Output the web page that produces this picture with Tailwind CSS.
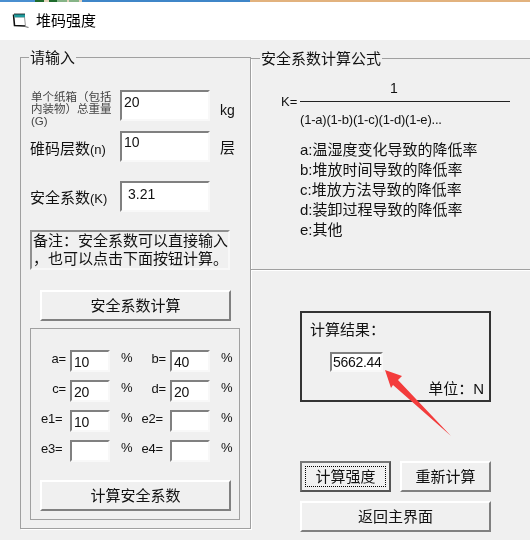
<!DOCTYPE html>
<html>
<head>
<meta charset="utf-8">
<script src="https://cdn.jsdelivr.net/npm/@tailwindcss/browser@4"></script>
</head>
<body class="m-0 bg-[#f0f0f0]">
<div class="relative w-[530px] h-[540px] overflow-hidden bg-[#f0f0f0] text-[#111] blur-[0.3px] font-['Liberation_Sans','Noto_Sans_CJK_SC',sans-serif] text-[15px] leading-[18px]">
  <div class="flex h-[2px]">
    <div class="w-[35px] bg-[#4a8fd0]"></div>
    <div class="w-[9px] bg-[#1f6b2c]"></div>
    <div class="w-[5px] bg-[#e6d4bc]"></div>
    <div class="w-[8px] bg-[#1f6b2c]"></div>
    <div class="w-[10px] bg-[#86b487]"></div>
    <div class="w-[2px] bg-[#e6d4bc]"></div>
    <div class="w-[10px] bg-[#86b487]"></div>
    <div class="w-[3px] bg-[#e6d4bc]"></div>
    <div class="w-[168px] bg-[#3f86c8]"></div>
    <div class="flex-1 bg-[#e2b27e]"></div>
  </div>
  <div class="h-[38px] bg-white flex items-center pl-[12px] gap-[7px] text-[15px]">
    <svg width="17" height="16" viewBox="0 0 17 16"><path d="M3 4h9.5l1 9.5" fill="none" stroke="#999" stroke-width="1"/><path d="M1.5 1.5L2.5 12.5L13 13" fill="none" stroke="#111" stroke-width="1.6"/><path d="M2 1h11v3.2H2.4z" fill="#1f9a9c"/><path d="M2 1h11" stroke="#111" stroke-width="0.8"/><path d="M13 13.5l3.5 1" stroke="#777" stroke-width="1.2"/></svg>
    <span class="text-black">堆码强度</span>
  </div>
  <div class="flex items-start pt-[17px] pl-[20px]">
    <!-- left group -->
    <div class="relative shrink-0 w-[231px] h-[472px] border border-[#a0a0a0] shadow-[1px_1px_0_#fff] pl-[9px]">
      <span class="absolute left-[8px] top-[-9px] px-[1px] bg-[#f0f0f0]">请输入</span>
      <div class="flex flex-col pt-[32px]">
        <div class="flex h-[31px] mb-[10px]">
          <div class="w-[90px] text-[11.5px] leading-[12px] text-[#444] pt-[1px] pl-[1px] whitespace-nowrap"><div>单个纸箱（包括</div><div>内装物）总重量</div><div>(G)</div></div>
          <div class="w-[90px] h-[31px] bg-white border-2 border-t-[#808080] border-l-[#808080] border-r-[#f8f8f8] border-b-[#f8f8f8] pl-[2px] text-[14px] leading-[20px]">20</div>
          <span class="ml-[10px] mt-[11px] text-[14px]">kg</span>
        </div>
        <div class="flex h-[31px] mb-[19px]">
          <div class="w-[90px] pt-[9px]">碓码层数<span class="text-[13px]">(n)</span></div>
          <div class="w-[90px] h-[31px] bg-white border-2 border-t-[#808080] border-l-[#808080] border-r-[#f8f8f8] border-b-[#f8f8f8] pl-[2px] text-[14px] leading-[18px]">10</div>
          <span class="ml-[10px] pt-[8px]">层</span>
        </div>
        <div class="flex h-[31px] mb-[18px]">
          <div class="w-[90px] pt-[8px]">安全系数<span class="text-[13px]">(K)</span></div>
          <div class="w-[90px] h-[31px] bg-white border-2 border-t-[#808080] border-l-[#808080] border-r-[#f8f8f8] border-b-[#f8f8f8] pl-[6px] text-[14px] leading-[22px]">3.21</div>
        </div>
        <div class="w-[200px] h-[40px] border-2 border-t-[#909090] border-l-[#909090] border-r-[#f8f8f8] border-b-[#f8f8f8] text-[15px] leading-[18px] pl-[1px] whitespace-nowrap"><div>备注：安全系数可以直接输入</div><div>，也可以点击下面按钮计算。</div></div>
        <button class="w-[191px] h-[31px] ml-[10px] mt-[20px] bg-[#f0f0f0] border-2 border-t-white border-l-white border-r-[#808080] border-b-[#808080] text-[15px]">安全系数计算</button>
        <!-- inner group -->
        <div class="w-[210px] h-[192px] mt-[7px] border border-[#a0a0a0] pt-[21px]">
          <div class="grid grid-cols-[39px_40px_60px_40px_20px] auto-rows-[22px] gap-y-[8px] text-[13px] leading-[18px] tracking-[-0.2px]">
            <div class="pr-[4px] text-right">a=</div>
            <div class="w-[40px] h-[22px] bg-white border-2 border-t-[#808080] border-l-[#808080] border-r-[#f8f8f8] border-b-[#f8f8f8] pl-[2px] text-[14px] leading-[20px]">10</div>
            <div class="flex justify-between pl-[11px] pr-[4px]"><span class="leading-[15px]">%</span><span>b=</span></div>
            <div class="w-[40px] h-[22px] bg-white border-2 border-t-[#808080] border-l-[#808080] border-r-[#f8f8f8] border-b-[#f8f8f8] pl-[2px] text-[14px] leading-[20px]">40</div>
            <div class="pl-[11px] leading-[15px]">%</div>

            <div class="pr-[4px] text-right">c=</div>
            <div class="w-[40px] h-[22px] bg-white border-2 border-t-[#808080] border-l-[#808080] border-r-[#f8f8f8] border-b-[#f8f8f8] pl-[2px] text-[14px] leading-[20px]">20</div>
            <div class="flex justify-between pl-[11px] pr-[4px]"><span class="leading-[15px]">%</span><span>d=</span></div>
            <div class="w-[40px] h-[22px] bg-white border-2 border-t-[#808080] border-l-[#808080] border-r-[#f8f8f8] border-b-[#f8f8f8] pl-[2px] text-[14px] leading-[20px]">20</div>
            <div class="pl-[11px] leading-[15px]">%</div>

            <div class="pl-[10px]">e1=</div>
            <div class="w-[40px] h-[22px] bg-white border-2 border-t-[#808080] border-l-[#808080] border-r-[#f8f8f8] border-b-[#f8f8f8] pl-[2px] text-[14px] leading-[20px]">10</div>
            <div class="flex justify-between pl-[11px] pr-[7px]"><span class="leading-[15px]">%</span><span>e2=</span></div>
            <div class="w-[40px] h-[22px] bg-white border-2 border-t-[#808080] border-l-[#808080] border-r-[#f8f8f8] border-b-[#f8f8f8]"></div>
            <div class="pl-[11px] leading-[15px]">%</div>

            <div class="pl-[10px]">e3=</div>
            <div class="w-[40px] h-[22px] bg-white border-2 border-t-[#808080] border-l-[#808080] border-r-[#f8f8f8] border-b-[#f8f8f8]"></div>
            <div class="flex justify-between pl-[11px] pr-[7px]"><span class="leading-[15px]">%</span><span>e4=</span></div>
            <div class="w-[40px] h-[22px] bg-white border-2 border-t-[#808080] border-l-[#808080] border-r-[#f8f8f8] border-b-[#f8f8f8]"></div>
            <div class="pl-[11px] leading-[15px]">%</div>
          </div>
          <button class="block w-[191px] h-[31px] ml-[9px] mt-[18px] bg-[#f0f0f0] border-2 border-t-white border-l-white border-r-[#808080] border-b-[#808080] text-[15px]">计算安全系数</button>
        </div>
      </div>
    </div>
    <!-- right column -->
    <div class="ml-[-1px] w-[285px] shrink-0">
      <div class="relative h-[212px] mt-[1px] border border-[#a0a0a0] shadow-[1px_1px_0_#fff]">
        <span class="absolute left-[9px] top-[-9px] px-[1px] bg-[#f0f0f0]">安全系数计算公式</span>
        <div class="flex items-center pl-[30px] pt-[33px] h-[52px]">
          <span class="text-[13px] w-[19px]">K=</span>
          <div class="relative w-[210px] h-[1px] bg-[#222]"><span class="absolute left-0 w-[188px] top-[-22px] text-center text-[14px]">1</span></div>
        </div>
        <div class="pl-[49px] text-[13px] tracking-[-0.2px]">(1-a)(1-b)(1-c)(1-d)(1-e)...</div>
        <div class="pl-[49px] pt-[11px] text-[15px] leading-[20px]">
          <div>a:温湿度变化导致的降低率</div>
          <div>b:堆放时间导致的降低率</div>
          <div>c:堆放方法导致的降低率</div>
          <div>d:装卸过程导致的降低率</div>
          <div>e:其他</div>
        </div>
      </div>
      <div class="ml-[50px] mt-[41px] relative w-[191px] h-[91px] border-2 border-[#333]">
        <div class="pl-[8px] pt-[8px]">计算结果：</div>
        <div class="ml-[28px] mt-[13px] w-[53px] h-[20px] bg-white border-2 border-t-[#808080] border-l-[#808080] border-r-[#f8f8f8] border-b-[#f8f8f8] text-[14px] leading-[16px] pl-[1px] whitespace-nowrap tracking-[-0.3px]">5662.44</div>
        <div class="absolute right-[5px] bottom-[2px] text-[15px]">单位：N</div>
      </div>
      <div class="ml-[50px] mt-[59px] flex gap-[9px]">
        <button class="w-[91px] h-[31px] bg-[#f0f0f0] border-2 border-[#555] border-t-[#777] border-l-[#777] outline-1 outline-dotted outline-black -outline-offset-[6px] text-[15px]">计算强度</button>
        <button class="w-[91px] h-[31px] bg-[#f0f0f0] border-2 border-t-white border-l-white border-r-[#808080] border-b-[#808080] text-[15px]">重新计算</button>
      </div>
      <button class="block ml-[50px] mt-[9px] w-[191px] h-[31px] bg-[#f0f0f0] border-2 border-t-white border-l-white border-r-[#808080] border-b-[#808080] text-[15px]">返回主界面</button>
    </div>
  </div>
  <!-- annotation arrow -->
  <svg class="absolute left-0 top-0 pointer-events-none" width="530" height="540" viewBox="0 0 530 540"><path d="M385 370L402 376L398 380L451 436L393 385L391 388Z" fill="#f33c3c"/></svg>
</div>
</body>
</html>
